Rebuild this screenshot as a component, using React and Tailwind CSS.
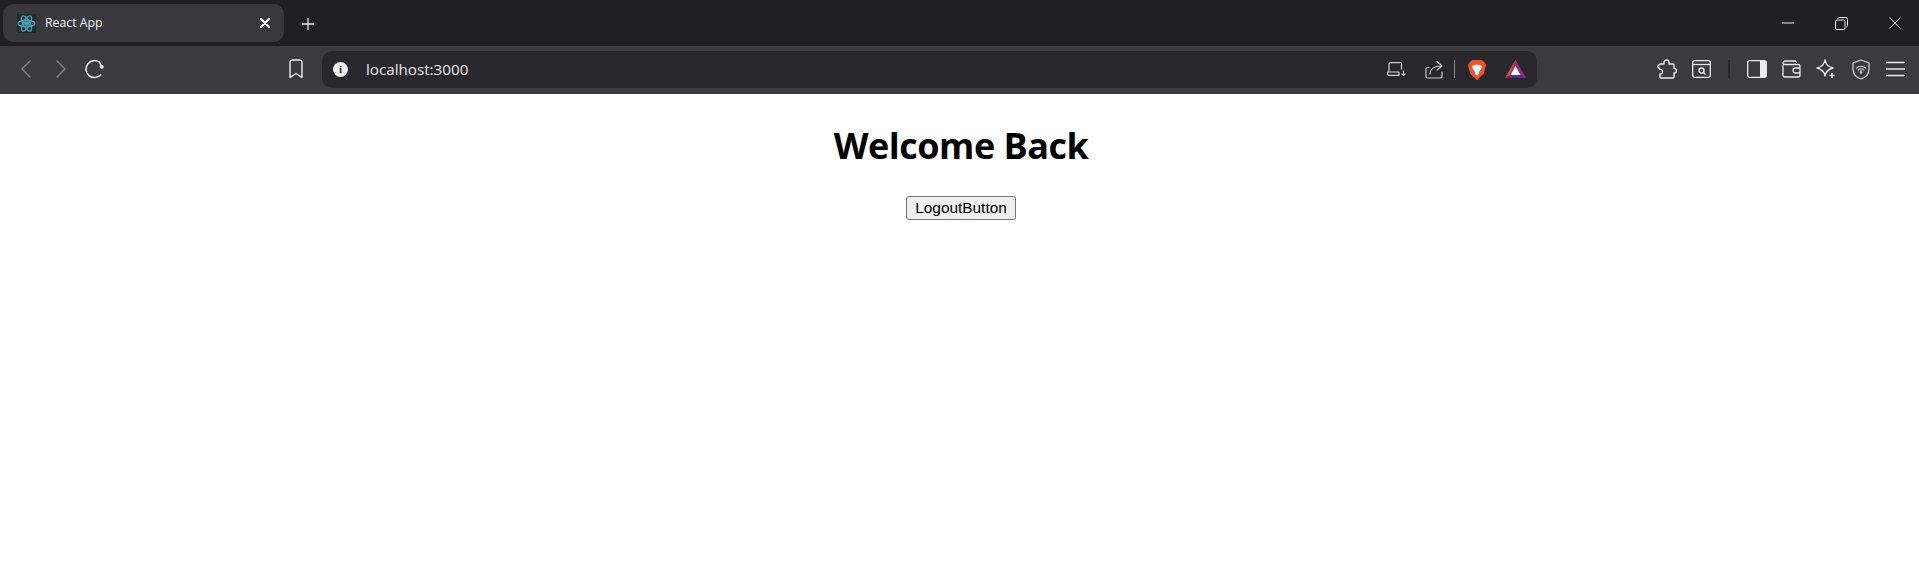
import React from "react";

const Ic = ({ w = 24, h = 24, vb, children, className = "" }) => (
  <svg width={w} height={h} viewBox={vb || `0 0 ${w} ${h}`} fill="none" stroke="currentColor" strokeWidth="1.4" strokeLinecap="round" strokeLinejoin="round" className={className}>
    {children}
  </svg>
);

export default function App() {
  return (
    <div className="min-h-[576px] bg-white flex flex-col font-['Liberation_Sans',sans-serif]">
      <div className="h-[46px] bg-[#1f1f24] flex items-start text-white shrink-0">
        <div className="ml-[3px] mt-[4px] w-[281px] h-[38px] rounded-[10px] bg-[#38383d] flex items-center pl-[14px] pr-[14px] shrink-0">
          <div className="w-[19px] h-[19px] bg-[#24282c] flex items-center justify-center">
            <svg width="19" height="19" viewBox="0 0 19 19" fill="none" stroke="#4ea5bd" strokeWidth="1.3">
              <circle cx="9.5" cy="9.5" r="1.8" fill="#4ea5bd" />
              <ellipse cx="9.5" cy="9.5" rx="8.5" ry="3.4" />
              <ellipse cx="9.5" cy="9.5" rx="8.5" ry="3.4" transform="rotate(60 9.5 9.5)" />
              <ellipse cx="9.5" cy="9.5" rx="8.5" ry="3.4" transform="rotate(120 9.5 9.5)" />
            </svg>
          </div>
          <span className="ml-[9px] text-[12.3px] text-[#f2f2f2] font-['Open_Sans',sans-serif]">React App</span>
          <svg className="ml-auto" width="10" height="10" viewBox="0 0 10 10" stroke="#fff" strokeWidth="2" strokeLinecap="round"><path d="M1 1l8 8M9 1l-8 8" /></svg>
        </div>
        <svg className="ml-[18px] mt-[18px]" width="12" height="12" viewBox="0 0 12 12" stroke="#e8e8e8" strokeWidth="1.3"><path d="M6 0v12M0 6h12" /></svg>
        <div className="ml-auto flex items-center h-[46px] pr-[18px] text-[#f0f0f0]">
          <svg width="12" height="2" viewBox="0 0 12 2" stroke="currentColor" strokeWidth="1"><path d="M0 1h12" /></svg>
          <svg className="ml-[41px]" width="13" height="13" viewBox="0 0 13 13" fill="none" stroke="currentColor" strokeWidth="1"><rect x="0.5" y="3" width="9.5" height="9.5" rx="1.5" /><path d="M3 1.5C3.3.8 3.8.5 4.5.5h6c1.2 0 2 .8 2 2v6c0 .7-.3 1.2-1 1.5" /></svg>
          <svg className="ml-[41px]" width="12" height="12" viewBox="0 0 12 12" stroke="currentColor" strokeWidth="1"><path d="M.5.5l11 11M11.5.5l-11 11" /></svg>
        </div>
      </div>
      <div className="h-[48px] pb-[2px] bg-[#3a3a3f] flex items-center shrink-0 text-[#f0f0f0]">
        <Ic w={12} h={20} className="ml-[20px] text-[#85858a]"><path d="M10 2L2 10l8 8" /></Ic>
        <Ic w={12} h={20} className="ml-[23px] text-[#85858a]"><path d="M2 2l8 8-8 8" /></Ic>
        <svg className="ml-[18px]" width="20" height="20" viewBox="0 0 20 20" fill="none" stroke="currentColor" strokeWidth="1.5" strokeLinecap="round">
          <path d="M14.5 3.2A8.5 8.5 0 1 0 15.8 15.8" /><path d="M14.5 3.2L16.7 7.8" /><circle cx="16.7" cy="7.8" r="2" fill="currentColor" stroke="none" />
        </svg>
        <svg className="ml-[183px]" width="16" height="20" viewBox="0 0 16 20" fill="none" stroke="currentColor" strokeWidth="1.4" strokeLinejoin="round"><path d="M2 3.5C2 2 3 1 4.5 1h7C13 1 14 2 14 3.5V18.5l-6-4-6 4z" /></svg>
        <div className="ml-[18px] w-[1215px] h-[37px] rounded-[10px] bg-[#28282c] flex items-center shrink-0 pl-[11px]">
          <span className="w-[15px] h-[15px] rounded-full bg-[#eeeeee] text-[#28282c] text-[11px] font-bold leading-[15px] text-center font-['Liberation_Serif',serif]">i</span>
          <span className="ml-[18px] text-[15.2px] text-[#e8e8e8] font-['Open_Sans',sans-serif]">localhost:3000</span>
          <div className="ml-auto flex items-center pr-[11px]">
            <svg width="19" height="15" viewBox="0 0 19 15" fill="none" stroke="#d0d0d0" strokeWidth="1.2" strokeLinecap="round" strokeLinejoin="round"><path d="M2 9.5V2C2 1.2 2.7.6 3.5.6h9.5c.8 0 1.500.6 1.500 1.400v5M.6 10v2c0 .8.6 1.400 1.400 1.400h10V10zM16.5 9v4.500M15 12l1.500 1.500L18 12" /></svg>
            <svg className="ml-[19px]" width="18" height="19" viewBox="0 0 18 19" fill="none" stroke="#c8c8c8" strokeWidth="1.2" strokeLinecap="round" strokeLinejoin="round"><path d="M17 12v4.5c0 .8-.7 1.500-1.500 1.500H2.500C1.700 18 1 17.300 1 16.500V9c0-.8.7-1.500 1.500-1.500H4M5 14c0-5 4-8 12-8M12 1.500L17 6l-5 4" /></svg>
            <div className="ml-[11px] w-px h-[18px] bg-[#8a8a8e]" />
            <svg className="ml-[13px]" width="18" height="21" viewBox="0 0 18 21">
              <path d="M4 1h10l2.500 2.500L18 6l-1 4-1.500 5-4 3.500L9 21l-2.500-2.500-4-3.500L1 10 0 6l1.500-2.500z" fill="#f0532a" />
              <path d="M4 7l3-1.200h4L14 7l-1 3.500-2 2.200v2.300L9 16.500 7 15v-2.300L5 10.500z" fill="#fff" />
            </svg>
            <svg className="ml-[19px]" width="21" height="19" viewBox="0 0 21 19">
              <path d="M10.500 0L21 18H0z" fill="#8e2f7c" />
              <path d="M10.500 0L0 18l5-3z" fill="#e5472c" />
              <path d="M0 18h21l-5-3H5z" fill="#5a2d8c" />
              <path d="M10.500 6L15.500 15h-10z" fill="#fff" />
            </svg>
          </div>
        </div>
        <div className="ml-[120px] flex items-center text-[#ececec]">
          <svg width="20" height="20" viewBox="0 0 20 20" fill="none" stroke="currentColor" strokeWidth="1.4" strokeLinejoin="round">
            <path d="M7 3.500C7 2 8.200 1 9.500 1S12 2 12 3.500V5h4c.6 0 1 .4 1 1v3.500c1.500-.3 2.500.8 2.500 2.200s-1 2.500-2.500 2.300V18c0 .6-.4 1-1 1H4c-.6 0-1-.4-1-1v-3c1.200.3 2.500-.8 2.500-2.300S4.200 10 3 10.500L1 8c-.3-.5-.2-1 .2-1.300L3 5h4z" />
          </svg>
          <svg className="ml-[15px]" width="19" height="18" viewBox="0 0 19 18" fill="none" stroke="currentColor" strokeWidth="1.3"><rect x=".7" y=".7" width="17.6" height="16.6" rx="2" /><path d="M1 4.500h17" /><circle cx="9.500" cy="10.500" r="2.500" strokeWidth="1.5" /><path d="M11.500 12.500l2 2" strokeWidth="1.5" /></svg>
          <div className="ml-[17px] w-[2px] h-[18px] bg-[#27272b]" />
          <svg className="ml-[17px]" width="20" height="18" viewBox="0 0 20 18" fill="none"><rect x=".7" y=".7" width="18.6" height="16.6" rx="2" stroke="currentColor" strokeWidth="1.3" /><path d="M13 1h4.500c1 0 1.800.8 1.800 1.800v12.400c0 1-.8 1.800-1.800 1.800H13z" fill="currentColor" /></svg>
          <svg className="ml-[15px]" width="19" height="18" viewBox="0 0 19 18" fill="none" stroke="currentColor" strokeWidth="1.3"><path d="M1 4.500V15c0 1.200.8 2 2 2h13c1.200 0 2-.8 2-2V6.500c0-1.200-.8-2-2-2H3c-1.200 0-2-.8-2-1.500S1.800 1 3 1h10c1 0 1.500.7 1.500 2" /><path d="M18 8h-4.500a2.200 2.200 0 0 0 0 5H18" /></svg>
          <svg className="ml-[15px]" width="20" height="20" viewBox="0 0 20 20" fill="none" stroke="currentColor" strokeWidth="1.4" strokeLinejoin="round"><path d="M9 1c.8 4.500 3 6.800 8 8-5 1.200-7.200 3.500-8 8-.8-4.500-3-6.800-8-8 5-1.200 7.200-3.500 8-8z" /><path d="M16 14v5M13.500 16.500h5" strokeWidth="1.6" /></svg>
          <svg className="ml-[16px]" width="18" height="21" viewBox="0 0 18 21" fill="none" stroke="#c9c9cc" strokeWidth="1.3" strokeLinecap="round"><path d="M9 1l8 3v6c0 5-3.500 8.500-8 10C4.500 18.500 1 15 1 10V4z" /><path d="M4.500 9c2.600-2.200 6.400-2.200 9 0M6.300 11c1.600-1.300 3.800-1.300 5.400 0" /><circle cx="9" cy="13.300" r=".8" fill="#c9c9cc" /></svg>
          <svg className="ml-[16px]" width="19" height="16" viewBox="0 0 19 16" stroke="currentColor" strokeWidth="1.3"><path d="M0 1.500h19M0 8h19M0 14.500h19" /></svg>
        </div>
      </div>
      <main className="flex-1 flex flex-col items-center pl-[3px] text-black">
        <h1 className="mt-[27px] text-[36px] leading-[50px] font-bold font-['Open_Sans',sans-serif] tracking-[-0.5px]">Welcome Back</h1>
        <button className="mt-[25px] w-[110px] h-[24px] text-[15.4px] leading-none text-black bg-[#efefef] border border-[#767676] rounded-[3px] font-['Liberation_Sans',sans-serif]">LogoutButton</button>
      </main>
    </div>
  );
}
